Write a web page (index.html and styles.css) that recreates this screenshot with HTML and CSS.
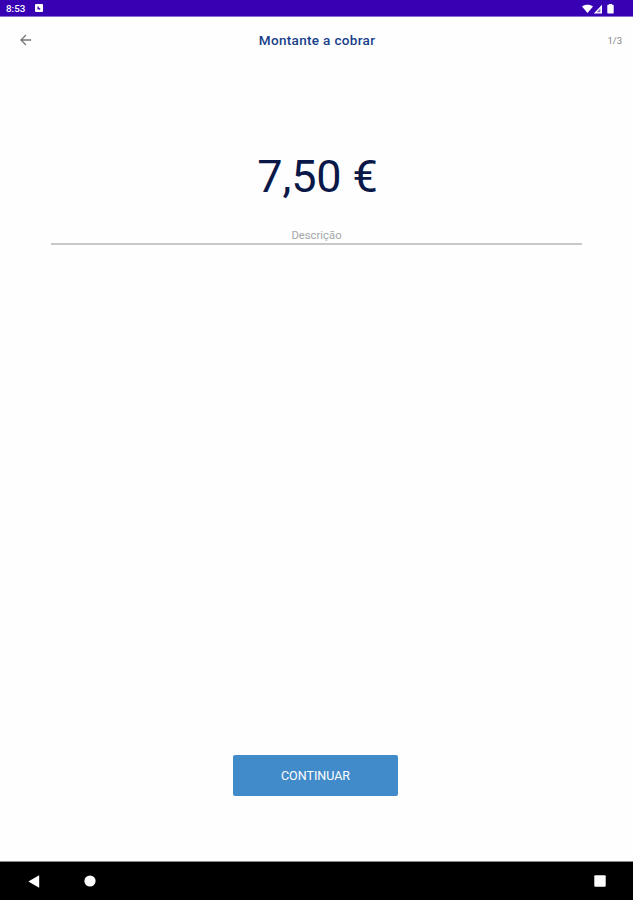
FILE: index.html
```html
<!DOCTYPE html>
<html lang="pt">
<head>
    <meta charset="UTF-8">
    <meta name="viewport" content="width=device-width, initial-scale=1.0">
    <link rel="stylesheet" href="styles.css">
    <title>Montante a cobrar</title>
</head>
<body>
    <!-- status bar -->
    <div class="status">
        <span class="time">8:53</span>
        <svg class="app" width="8" height="8" viewBox="0 0 8 8">
            <rect width="8" height="8" rx="1" fill="#fff"/>
            <path d="M3 2.5v3M3 3.5l2.2 2" stroke="#3700b3" stroke-width="1.1" fill="none"/>
        </svg>
        <svg class="signal" width="34" height="11" viewBox="0 0 34 11">
            <path d="M1 3.6C3.8 1 9.2 1 12 3.6L6.5 10z" fill="#fff"/>
            <path d="M12.8 10.5L21 1.8v8.7z" fill="#fff"/>
            <path d="M15.8 9.2l3.6-4v4z" fill="#3700b3" opacity=".6"/>
            <path d="M27 1.7h1V1h3v0.7h1q0.7 0 0.7 0.7v7.4q0 0.7-0.7 0.7h-5q-0.7 0-0.7-0.7V2.4q0-0.7 0.7-0.7z" fill="#fff"/>
        </svg>
    </div>
    <!-- header -->
    <header class="head">
        <button class="back" aria-label="Voltar">
            <svg width="12" height="12" viewBox="0 0 12 12">
                <path d="M11.2 6H1.2M6 1L1 6l5 5" stroke="#777" stroke-width="1.3" fill="none"/>
            </svg>
        </button>
        <h1 class="title">Montante a cobrar</h1>
        <span class="step">1/3</span>
    </header>
    <!-- amount -->
    <main class="content">
        <div class="amount">7,50 €</div>
        <input type="text" class="desc" placeholder="Descrição">
        <button class="btn">CONTINUAR</button>
    </main>
    <!-- navigation bar -->
    <nav class="nav">
        <svg width="12" height="13" viewBox="0 0 12 13"><path d="M0.3 6.5L11.2 0.3v12.4z" fill="#fff"/></svg>
        <svg class="home" width="12" height="12" viewBox="0 0 12 12"><circle cx="6" cy="6" r="5.6" fill="#fff"/></svg>
        <svg class="recent" width="12" height="12" viewBox="0 0 12 12"><rect x="0.3" y="0.3" width="11.4" height="11.4" rx="1" fill="#fff"/></svg>
    </nav>
</body>
</html>
```
FILE: styles.css
```css
*{
    margin: 0;
    padding: 0;
    box-sizing: border-box;
}
body{
    height: 100vh;
    width: 100%;
    display: flex;
    flex-direction: column;
    background-color: #fefefe;
    font-family: Roboto, sans-serif;
    overflow: hidden;
}
.status{
    height: 17px;
    display: flex;
    align-items: center;
    padding: 0 18px 0 6px;
    background-color: #3700b3;
    border-bottom: 1px solid #8b70d2;
    color: white;
}
.time{
    width: 20px;
    font-size: 9.8px;
    font-weight: 500;
    line-height: 16px;
    padding-top: 1px;
    white-space: nowrap;
}
.app{
    margin-left: 9px;
}
.signal{
    margin-left: auto;
}
.head{
    height: 46px;
    display: grid;
    grid-template-columns: 100px 1fr 100px;
    align-items: center;
    padding: 0 11px 0 20px;
}
.back{
    display: flex;
    border: none;
    background: none;
    cursor: pointer;
}
.title{
    padding-right: 8px;
    text-align: center;
    font-size: 13.5px;
    font-weight: 500;
    letter-spacing: 0.33px;
    color: #173f8a;
}
.step{
    text-align: right;
    font-size: 9.5px;
    color: #858585;
}
.content{
    flex: 1;
    display: flex;
    flex-direction: column;
    align-items: center;
}
.amount{
    margin-top: 87px;
    padding-left: 2px;
    font-size: 45px;
    font-weight: 400;
    line-height: 54px;
    letter-spacing: -0.1px;
    color: #0a1848;
}
.desc{
    width: 531px;
    height: 19px;
    margin-top: 22px;
    padding-top: 2px;
    border: none;
    border-bottom: 2px solid #c8c8c8;
    outline: none;
    background: none;
    text-align: center;
    font-family: inherit;
    font-size: 11.3px;
}
.desc::placeholder{
    color: #a3a6a9;
}
.btn{
    width: 165px;
    height: 41px;
    margin-top: auto;
    margin-bottom: 65px;
    margin-right: 2px;
    border: none;
    border-radius: 2px;
    background-color: #428bca;
    color: white;
    font-family: inherit;
    font-size: 12.5px;
    cursor: pointer;
}
.nav{
    height: 39px;
    display: flex;
    align-items: center;
    padding: 0 27px 0 28px;
    border-top: 1px solid #8a8a8a;
    background-color: #000;
}
.home{
    margin-left: 44px;
}
.recent{
    margin-left: auto;
}
```
